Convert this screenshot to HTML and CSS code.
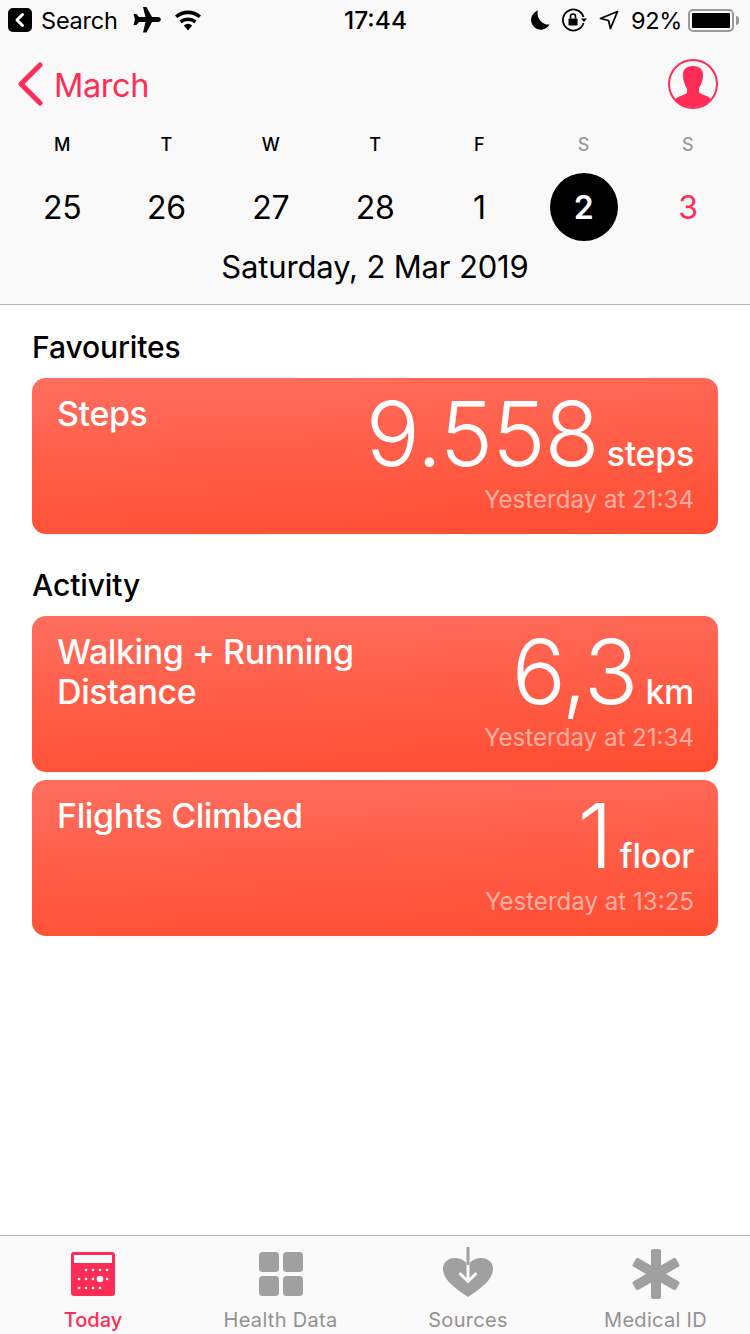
FILE: index.html
```html
<!DOCTYPE html>
<html lang="en">
<head>
  <meta charset="UTF-8" />
  <title>Health Today</title>
  <link rel="stylesheet" href="styles.css">
</head>
<body>
<div class="phone">
  <header class="top">
    <div class="status">
      <div class="status-left">
        <svg class="ic-back" width="24" height="24" viewBox="0 0 24 24"><rect width="24" height="24" rx="5"/><path d="M14.5 6.5 9 12l5.500 5.500" fill="none" stroke="#fff" stroke-width="3" stroke-linecap="round" stroke-linejoin="round"/></svg>
        <span class="status-search">Search</span>
        <svg class="ic-plane" width="28" height="26" viewBox="0 0 28 26"><path d="M10 0h3.500l5.500 10h6c1.800 0 2.800 1.200 2.800 2.500S26.800 15 25 15h-6l-5.500 10.500H10l2.500-10.500H6l-2.500 3H0.500L2 12.500.500 7h3L6 10h6.500z"/></svg>
        <svg class="ic-wifi" width="28" height="22" viewBox="0 0 28 22"><path d="M14 21.500 9.800 16.600a6.500 6.500 0 0 1 8.400 0z"/><path d="M7.700 14.200 5.400 11.500a13.500 13.500 0 0 1 17.200 0l-2.300 2.700a10 10 0 0 0-12.600 0z"/><path d="M3.300 9.100 1 6.400a20 20 0 0 1 26 0l-2.300 2.700a16.600 16.600 0 0 0-21.400 0z"/></svg>
      </div>
      <div class="status-time">17:44</div>
      <div class="status-right">
        <svg width="20" height="22" viewBox="0 0 20 22"><path d="M8 1.500a9.800 9.800 0 1 0 11.500 14A11 11 0 0 1 8 1.500z"/></svg>
        <svg class="ic-lock" width="26" height="24" viewBox="0 0 26 24"><path d="M22.500 9A10.500 10.500 0 1 0 22.500 15" fill="none" stroke="#000" stroke-width="1.800"/><path d="M20 10.500h6l-3 3.500z"/><rect x="7.500" y="10.500" width="9" height="7" rx="1"/><path d="M9.500 10.500V8.500a2.500 2.500 0 0 1 5 0v2" fill="none" stroke="#000" stroke-width="1.600"/></svg>
        <svg class="ic-loc" width="20" height="20" viewBox="0 0 20 20"><path d="M18.500 1.500 1.500 8.500l8 2 2 8z" fill="none" stroke="#000" stroke-width="1.800" stroke-linejoin="round"/></svg>
        <span class="status-pct">92%</span>
        <div class="battery"><div class="battery-fill"></div></div>
        <div class="battery-cap"></div>
      </div>
    </div>

    <div class="nav">
      <div class="nav-back">
        <svg width="26" height="44" viewBox="0 0 26 44"><path d="M23 3 4 22l19 19" fill="none" stroke="#ff2d55" stroke-width="5" stroke-linecap="round" stroke-linejoin="round"/></svg>
        <span>March</span>
      </div>
      <svg class="avatar" width="50" height="50" viewBox="0 0 50 50"><circle cx="25" cy="25" r="24" fill="none" stroke="#ff2d55" stroke-width="2"/><path d="M25 7c-7 0-10 3.500-10 9 0 3 .5 6 1.500 8.500.8 2.500 2 4 2.500 5.500v4c-2 2-8 3-11 5.500a1 1 0 0 0-.5 1.200A23 23 0 0 0 25 48a23 23 0 0 0 17.500-7.800c.2-.4 0-.9-.5-1.200-3-2.500-9-3.500-11-5.500v-4c.5-1.500 1.700-3 2.500-5.500C34.500 22 35 19 35 16c0-5.500-3-9-10-9z" fill="#ff2d55"/></svg>
    </div>

    <div class="week">
      <div class="day"><span class="day-letter">M</span><span class="day-num">25</span></div>
      <div class="day"><span class="day-letter">T</span><span class="day-num">26</span></div>
      <div class="day"><span class="day-letter">W</span><span class="day-num">27</span></div>
      <div class="day"><span class="day-letter">T</span><span class="day-num">28</span></div>
      <div class="day"><span class="day-letter">F</span><span class="day-num">1</span></div>
      <div class="day weekend"><span class="day-letter">S</span><span class="day-num selected">2</span></div>
      <div class="day weekend"><span class="day-letter">S</span><span class="day-num today">3</span></div>
    </div>
    <div class="full-date">Saturday, 2 Mar 2019</div>
  </header>

  <main class="content">
    <h2 class="section-title">Favourites</h2>
    <div class="card">
      <div class="card-title">Steps</div>
      <div class="card-side">
        <div class="card-value"><span class="big">9.558</span><span class="unit">steps</span></div>
        <div class="card-time">Yesterday at 21:34</div>
      </div>
    </div>

    <h2 class="section-title second">Activity</h2>
    <div class="card">
      <div class="card-title">Walking + Running<br>Distance</div>
      <div class="card-side">
        <div class="card-value"><span class="big">6,3</span><span class="unit">km</span></div>
        <div class="card-time">Yesterday at 21:34</div>
      </div>
    </div>
    <div class="card">
      <div class="card-title">Flights Climbed</div>
      <div class="card-side">
        <div class="card-value"><span class="big">1</span><span class="unit">floor</span></div>
        <div class="card-time">Yesterday at 13:25</div>
      </div>
    </div>
  </main>

  <nav class="tabs">
    <div class="tab active">
      <div class="tab-icon">
        <svg width="44" height="44" viewBox="0 0 44 44">
          <rect width="44" height="44" rx="3" fill="#ff2d55"/>
          <rect x="3" y="3" width="38" height="8" fill="#fff"/>
          <g fill="#fff">
            <circle cx="15" cy="18" r="1.300"/><circle cx="22" cy="18" r="1.300"/><circle cx="29" cy="18" r="1.300"/><circle cx="36" cy="18" r="1.300"/>
            <circle cx="8" cy="27" r="1.300"/><circle cx="15" cy="27" r="1.300"/><circle cx="22" cy="27" r="1.300"/><circle cx="29" cy="27" r="3.300"/><circle cx="36" cy="27" r="1.300"/>
            <circle cx="8" cy="36" r="1.300"/><circle cx="15" cy="36" r="1.300"/><circle cx="22" cy="36" r="1.300"/><circle cx="29" cy="36" r="1.300"/>
          </g>
        </svg>
      </div>
      <span>Today</span>
    </div>
    <div class="tab">
      <div class="tab-icon">
        <svg width="44" height="44" viewBox="0 0 44 44" fill="#a0a0a0">
          <rect width="20" height="20" rx="3.500"/><rect x="24" width="20" height="20" rx="3.500"/>
          <rect y="24" width="20" height="20" rx="3.500"/><rect x="24" y="24" width="20" height="20" rx="3.500"/>
        </svg>
      </div>
      <span>Health Data</span>
    </div>
    <div class="tab">
      <div class="tab-icon">
        <svg width="52" height="54" viewBox="0 0 52 54">
          <path d="M26 50C14 42 1 33 1 22 1 15 6 11 13 11c6 0 10 3 13 7 3-4 7-7 13-7 7 0 12 4 12 11 0 11-13 20-25 28z" fill="#a0a0a0"/>
          <path d="M26 16v18M17.500 26l8.500 8.500 8.500-8.500" fill="none" stroke="#fafafa" stroke-width="3"/>
          <path d="M26 0v18" fill="none" stroke="#a0a0a0" stroke-width="3"/>
        </svg>
      </div>
      <span>Sources</span>
    </div>
    <div class="tab">
      <div class="tab-icon">
        <svg width="50" height="50" viewBox="0 0 50 50" fill="#a0a0a0">
          <rect x="20" y="0" width="10" height="50" rx="2"/>
          <rect x="20" y="0" width="10" height="50" rx="2" transform="rotate(60 25 25)"/>
          <rect x="20" y="0" width="10" height="50" rx="2" transform="rotate(120 25 25)"/>
        </svg>
      </div>
      <span>Medical ID</span>
    </div>
  </nav>
</div>
</body>
</html>
```

FILE: styles.css
```css
html, body {
  margin: 0;
  padding: 0;
}

body {
  font-family: Inter, "Liberation Sans", sans-serif;
  background: #fff;
  color: #000;
}

.phone {
  width: 750px;
  height: 1334px;
  display: flex;
  flex-direction: column;
  overflow: hidden;
}

.top {
  height: 304px;
  flex-shrink: 0;
  background: #f9f9f9;
  border-bottom: 1px solid #b4b4b4;
}

.status {
  height: 40px;
  display: flex;
  align-items: center;
  justify-content: space-between;
  padding: 0 11px 0 8px;
  font-size: 24px;
}

.status-left,
.status-right {
  width: 310px;
  display: flex;
  align-items: center;
}

.status-right {
  justify-content: flex-end;
}

.status-search {
  margin-left: 9px;
  font-size: 23.5px;
  letter-spacing: -0.2px;
}

.ic-plane {
  margin-left: 15px;
}

.ic-wifi {
  margin-left: 13px;
}

.status-time {
  font-weight: 500;
  font-size: 24.500px;
  margin-left: 4px;
}

.ic-lock {
  margin-left: 11px;
}

.ic-loc {
  margin-left: 12px;
}

.status-pct {
  margin-left: 12px;
  font-size: 23.5px;
  letter-spacing: -0.3px;
}

.battery {
  width: 46px;
  height: 23px;
  margin-left: 6px;
  border: 2px solid #9a9a9a;
  border-radius: 5px;
  padding: 2px;
  box-sizing: border-box;
}

.battery-fill {
  height: 100%;
  background: #000;
  border-radius: 1px;
}

.battery-cap {
  width: 3px;
  height: 9px;
  margin-left: 2px;
  background: #9a9a9a;
  border-radius: 0 3px 3px 0;
}

.nav {
  height: 92px;
  display: flex;
  align-items: center;
  justify-content: space-between;
  padding: 0 32px 4px 17px;
  box-sizing: border-box;
}

.nav-back {
  display: flex;
  align-items: center;
  color: #ff2d55;
  font-size: 32.500px;
  letter-spacing: -0.4px;
}

.nav-back span {
  margin-left: 11px;
  padding-top: 2px;
}

.week {
  display: grid;
  grid-template-columns: repeat(7, 104.3px);
  padding-left: 10px;
  padding-top: 1px;
}

.day {
  display: flex;
  flex-direction: column;
  align-items: center;
}

.day-letter {
  height: 24px;
  line-height: 24px;
  font-size: 18px;
  font-weight: 500;
}

.day-num {
  width: 68px;
  height: 68px;
  margin-top: 16px;
  line-height: 70px;
  text-align: center;
  font-size: 32px;
  letter-spacing: -0.3px;
}

.weekend .day-letter {
  color: #9b9b9b;
}

.selected {
  background: #000;
  color: #fff;
  border-radius: 50%;
  font-weight: 600;
}

.today {
  color: #ff2d55;
}

.full-date {
  margin-top: 6px;
  text-align: center;
  font-size: 31px;
  line-height: 40px;
  letter-spacing: -0.15px;
}

.content {
  flex: 1;
  padding: 0 32px;
  background: #fff;
}

.section-title {
  margin: 24px 0 12px 0;
  font-size: 30px;
  line-height: 37px;
  font-weight: 500;
  letter-spacing: -0.1px;
}

.section-title.second {
  margin-top: 33px;
  margin-bottom: 12px;
}

.card {
  height: 156px;
  margin-bottom: 8px;
  box-sizing: border-box;
  padding: 16px 24px 0 25px;
  display: flex;
  justify-content: space-between;
  border-radius: 14px;
  background: linear-gradient(177deg, #ff6e5e 0%, #ff4c30 100%);
  color: #fff;
}

.card-title {
  font-size: 34px;
  line-height: 40px;
  font-weight: 500;
  letter-spacing: -0.4px;
}

.card-side {
  display: flex;
  flex-direction: column;
  align-items: flex-end;
}

.card-value {
  height: 88px;
  margin-top: -4px;
  display: flex;
  align-items: baseline;
  gap: 8px;
}

.big {
  font-size: 90px;
  line-height: 88px;
  font-weight: 300;
  letter-spacing: -1px;
}

.unit {
  font-size: 34px;
  font-weight: 500;
  letter-spacing: -0.3px;
}

.card-time {
  margin-top: 7px;
  font-size: 24.100px;
  line-height: 30px;
  color: rgba(255, 255, 255, 0.55);
}

.tabs {
  height: 99px;
  flex-shrink: 0;
  box-sizing: border-box;
  border-top: 1px solid #b4b4b4;
  background: #fafafa;
  display: grid;
  grid-template-columns: 186px 189px 186px 189px;
}

.tab {
  height: 98px;
  display: flex;
  flex-direction: column;
  align-items: center;
  padding-top: 11px;
  box-sizing: border-box;
  color: #929292;
  font-size: 20px;
  letter-spacing: 0.3px;
}

.tab-icon {
  height: 54px;
  margin-bottom: 6px;
  display: flex;
  align-items: center;
}

.tab span {
  line-height: 26px;
}

.tab.active {
  color: #ff2d55;
  font-weight: 500;
  letter-spacing: 0;
}
```
